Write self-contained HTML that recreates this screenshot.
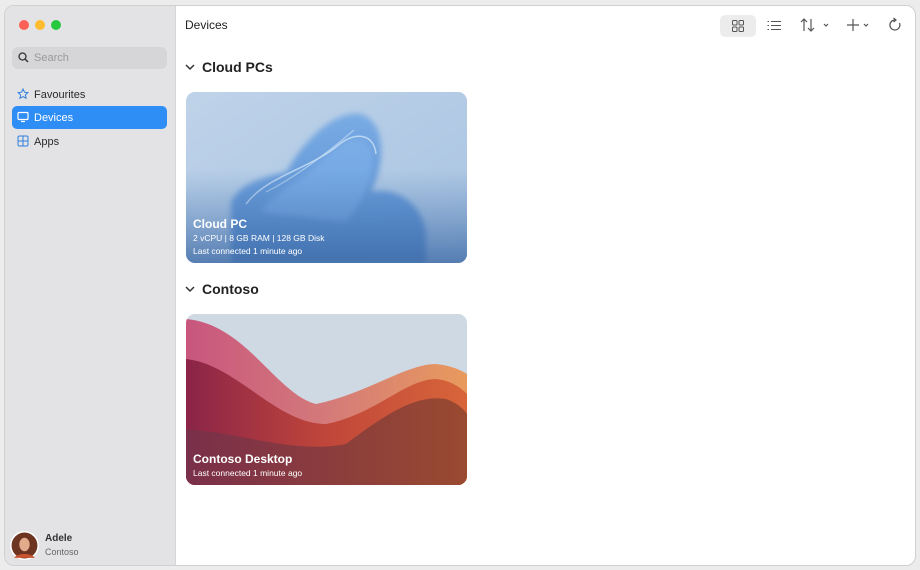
<!DOCTYPE html>
<html><head><meta charset="utf-8"><style>
*{box-sizing:border-box;margin:0;padding:0}
body{width:920px;height:570px;background:#ececec;font-family:"Liberation Sans",sans-serif;position:relative;overflow:hidden}
.win{position:absolute;left:4px;top:5px;width:912px;height:561px;background:#fff;border-radius:10px;overflow:hidden;border:1px solid #d0d0d0}
.side{position:absolute;left:0;top:0;width:171px;height:100%;background:#e3e3e5;border-right:1px solid #d6d6d8}
.dot{position:absolute;top:14px;width:10px;height:10px;border-radius:50%}
.search{position:absolute;left:7px;top:41px;width:155px;height:22px;background:#d6d6d8;border-radius:6px;font-size:11px;color:#9a9a9c;padding:5px 0 0 22px}
.item{position:absolute;left:7px;width:155px;height:23px;border-radius:5px;font-size:11px;color:#2a2a2a;padding:6px 0 0 22px}
.item svg{position:absolute;left:5px;top:5px}
.sel{background:#2f8ef5;color:#fff}
.main{position:absolute;left:171px;top:0;right:0;bottom:0}
.title{position:absolute;left:9px;top:12px;font-size:12px;color:#222}
.sec{position:absolute;left:26px;font-size:14px;font-weight:bold;color:#222}
.chev{position:absolute;left:9px}
.card{position:absolute;left:10px;width:281px;height:171px;border-radius:9px;overflow:hidden}
.card .t{position:absolute;left:7px;color:#fff;font-weight:bold;font-size:12px}
.card .s{position:absolute;left:7px;color:#fff;font-size:8.5px}
</style></head><body>
<div class="win">
<div class="side">
<div class="dot" style="left:14px;background:#fe5f57"></div>
<div class="dot" style="left:30px;background:#febc2e"></div>
<div class="dot" style="left:46px;background:#28c840"></div>
<div class="search"><svg style="position:absolute;left:6px;top:5px" width="11" height="11" viewBox="0 0 11 11"><circle cx="4.5" cy="4.5" r="3.5" fill="none" stroke="#333" stroke-width="1.3"/><path d="M7 7l3 3" stroke="#333" stroke-width="1.4"/></svg>Search</div>
<div class="item" style="top:77px"><svg width="12" height="12" viewBox="0 0 12 12"><path d="M6 1l1.5 3.2 3.4.4-2.5 2.3.7 3.4L6 8.6 2.9 10.3l.7-3.4L1.1 4.6l3.4-.4z" fill="none" stroke="#2f7fe0" stroke-width="1"/></svg>Favourites</div>
<div class="item sel" style="top:100px"><svg width="12" height="12" viewBox="0 0 12 12"><rect x="1" y="1.5" width="10" height="7" rx="1" fill="none" stroke="#fff" stroke-width="1.2"/><path d="M4 10.5h4" stroke="#fff" stroke-width="1.2"/></svg>Devices</div>
<div class="item" style="top:124px"><svg width="12" height="12" viewBox="0 0 12 12"><rect x="1" y="1" width="10" height="10" rx="1.5" fill="none" stroke="#2f7fe0" stroke-width="1"/><path d="M6 1v10M1 6h10" stroke="#2f7fe0" stroke-width="1"/></svg>Apps</div>
<svg style="position:absolute;left:5px;top:525px" width="29" height="29" viewBox="0 0 28 28"><circle cx="14" cy="14" r="14" fill="#fff"/><circle cx="14" cy="14" r="12.5" fill="#6e3422"/><ellipse cx="14" cy="13" rx="5" ry="6.5" fill="#e2ab8c"/><path d="M4 26c3-5 17-5 20 0z" fill="#c9532e"/></svg>
<div style="position:absolute;left:40px;top:527px;font-size:10px;font-weight:bold;color:#333">Adele</div>
<div style="position:absolute;left:40px;top:541px;font-size:9px;color:#666">Contoso</div>
</div>
<div class="main">
<div class="title">Devices</div>
<div style="position:absolute;left:544px;top:9px;width:36px;height:22px;background:#ececec;border-radius:5px"></div>
<svg style="position:absolute;left:556px;top:14px" width="12" height="12" viewBox="0 0 12 12" fill="none" stroke="#555" stroke-width="1"><rect x=".5" y=".5" width="4.5" height="4.5" rx="1"/><rect x="7" y=".5" width="4.5" height="4.5" rx="1"/><rect x=".5" y="7" width="4.5" height="4.5" rx="1"/><rect x="7" y="7" width="4.5" height="4.5" rx="1"/></svg>
<svg style="position:absolute;left:591px;top:14px" width="14" height="11" viewBox="0 0 14 11" stroke="#555" stroke-width="1.1"><path d="M4 1.5h10M4 5.5h10M4 9.5h10M0.5 1.5h1.5M0.5 5.5h1.5M0.5 9.5h1.5"/></svg>
<svg style="position:absolute;left:624px;top:12px" width="32" height="14" viewBox="0 0 32 14" fill="none" stroke="#555" stroke-width="1.2"><path d="M4 13V1M1 4l3-3 3 3M11 1v12M8 10l3 3 3-3M24 6l2 2 2-2"/></svg>
<svg style="position:absolute;left:671px;top:12px" width="28" height="14" viewBox="0 0 28 14" fill="none" stroke="#555" stroke-width="1.2"><path d="M6 1v12M0 7h12M17 6l2 2 2-2"/></svg>
<svg style="position:absolute;left:712px;top:11px" width="14" height="15" viewBox="0 0 14 15" fill="none" stroke="#555" stroke-width="1.2"><path d="M11.5 6A5 5 0 1 1 7 3"/><path d="M5.5 1L8 3 5.5 5"/></svg>
<svg class="chev" style="top:57px" width="10" height="8" viewBox="0 0 10 8"><path d="M1 2l4 4 4-4" fill="none" stroke="#333" stroke-width="1.5"/></svg>
<div class="sec" style="top:53px">Cloud PCs</div>
<div class="card" style="top:86px">
<svg width="281" height="171" viewBox="0 0 281 171" preserveAspectRatio="none">
<defs><linearGradient id="b0" x1="0" y1="0" x2="1" y2="1"><stop offset="0" stop-color="#bfd3e9"/><stop offset="1" stop-color="#a8c3e1"/></linearGradient>
<linearGradient id="b1" x1="0" y1="0" x2="0" y2="1"><stop offset="0" stop-color="#6aa3e3"/><stop offset="1" stop-color="#3a78c8"/></linearGradient>
<linearGradient id="fd" x1="0" y1="0" x2="0" y2="1"><stop offset=".45" stop-color="#5583bb" stop-opacity="0"/><stop offset="1" stop-color="#3f6ba6" stop-opacity=".8"/></linearGradient>
<filter id="bl"><feGaussianBlur stdDeviation="3"/></filter></defs>
<rect width="281" height="171" fill="url(#b0)"/>
<g filter="url(#bl)">
<path d="M45 110C55 90 80 85 100 80 120 45 150 18 175 22 200 30 200 70 185 100 210 95 235 110 240 140L240 171H45Z" fill="url(#b1)" opacity=".8"/>
<path d="M75 120C90 100 115 90 135 70 160 45 180 40 185 60 190 85 175 110 160 130Z" fill="#82b4ec" opacity=".6"/>
</g>
<path d="M60 112C80 85 120 78 150 55 170 38 188 42 190 62" fill="none" stroke="#dcebfa" stroke-width="1.5" opacity=".7"/>
<path d="M80 100C110 85 140 62 168 38" fill="none" stroke="#cfe2f7" stroke-width="1.2" opacity=".6"/>
<rect width="281" height="171" fill="url(#fd)"/>
</svg>
<div class="t" style="top:125px">Cloud PC</div>
<div class="s" style="top:141px">2 vCPU | 8 GB RAM | 128 GB Disk</div>
<div class="s" style="top:154px">Last connected 1 minute ago</div>
</div>
<svg class="chev" style="top:279px" width="10" height="8" viewBox="0 0 10 8"><path d="M1 2l4 4 4-4" fill="none" stroke="#333" stroke-width="1.5"/></svg>
<div class="sec" style="top:275px">Contoso</div>
<div class="card" style="top:308px">
<svg width="281" height="171" viewBox="0 0 281 171" preserveAspectRatio="none">
<defs><linearGradient id="p1" x1="0" y1="0" x2="1" y2="0"><stop offset="0" stop-color="#c8567e"/><stop offset=".5" stop-color="#d47a7a"/><stop offset="1" stop-color="#e89a5c"/></linearGradient>
<linearGradient id="p2" x1="0" y1="0" x2="1" y2="0"><stop offset="0" stop-color="#8a2448"/><stop offset=".5" stop-color="#c0463a"/><stop offset="1" stop-color="#d8653a"/></linearGradient>
<linearGradient id="p3" x1="0" y1="0" x2="1" y2="0"><stop offset="0" stop-color="#7a2f4a"/><stop offset="1" stop-color="#9a4a30"/></linearGradient></defs>
<rect width="281" height="171" fill="#cfd9e3"/>
<path d="M0 5C60 10 90 80 130 90 180 80 220 50 250 50 270 52 281 60 281 60V171H0Z" fill="url(#p1)"/>
<path d="M0 45C50 50 90 110 140 110 190 100 220 65 250 65 270 67 281 80 281 80V171H0Z" fill="url(#p2)"/>
<path d="M0 115C60 120 110 140 160 130 200 100 230 80 260 85 275 90 281 100 281 100V171H0Z" fill="url(#p3)"/>
</svg>
<div class="t" style="top:138px">Contoso Desktop</div>
<div class="s" style="top:154px">Last connected 1 minute ago</div>
</div>
</div>
</div>
</body></html>
